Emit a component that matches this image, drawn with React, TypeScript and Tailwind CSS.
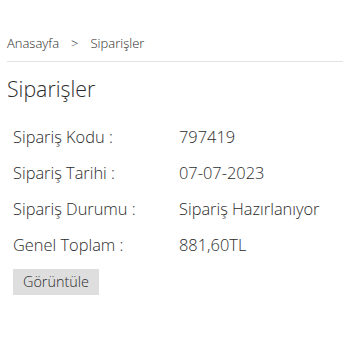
const rows = [
  { label: "Sipariş Kodu :", value: "797419" },
  { label: "Sipariş Tarihi :", value: "07-07-2023" },
  { label: "Sipariş Durumu :", value: "Sipariş Hazırlanıyor" },
  { label: "Genel Toplam :", value: "881,60TL" },
];

const App = () => {
  return (
    <div
      className="w-[350px] h-[350px] bg-white text-[#2b2b2b] font-light pt-[34px] pl-[7px] pr-[7px]"
      style={{ fontFamily: '"Open Sans", sans-serif' }}
    >
      <div className="flex items-center text-[13px] leading-[18px] pb-[9px] border-b border-[#e2e2e2]">
        <span>Anasayfa</span>
        <span className="ml-[12px]">&gt;</span>
        <span className="ml-[12px]">Siparişler</span>
      </div>
      <h1 className="text-[21.3px] leading-[30px] mt-[12px]">Siparişler</h1>
      <div className="pl-[6px] mt-[15px]">
        {rows.map((row) => (
          <div key={row.label} className="flex text-[16.4px] leading-[36px]">
            <span className="w-[166px]">{row.label}</span>
            <span>{row.value}</span>
          </div>
        ))}
        <button className="mt-[6px] bg-[#dedede] text-[14.4px] leading-[26px] px-[10px]">
          Görüntüle
        </button>
      </div>
    </div>
  );
};

export default App;
